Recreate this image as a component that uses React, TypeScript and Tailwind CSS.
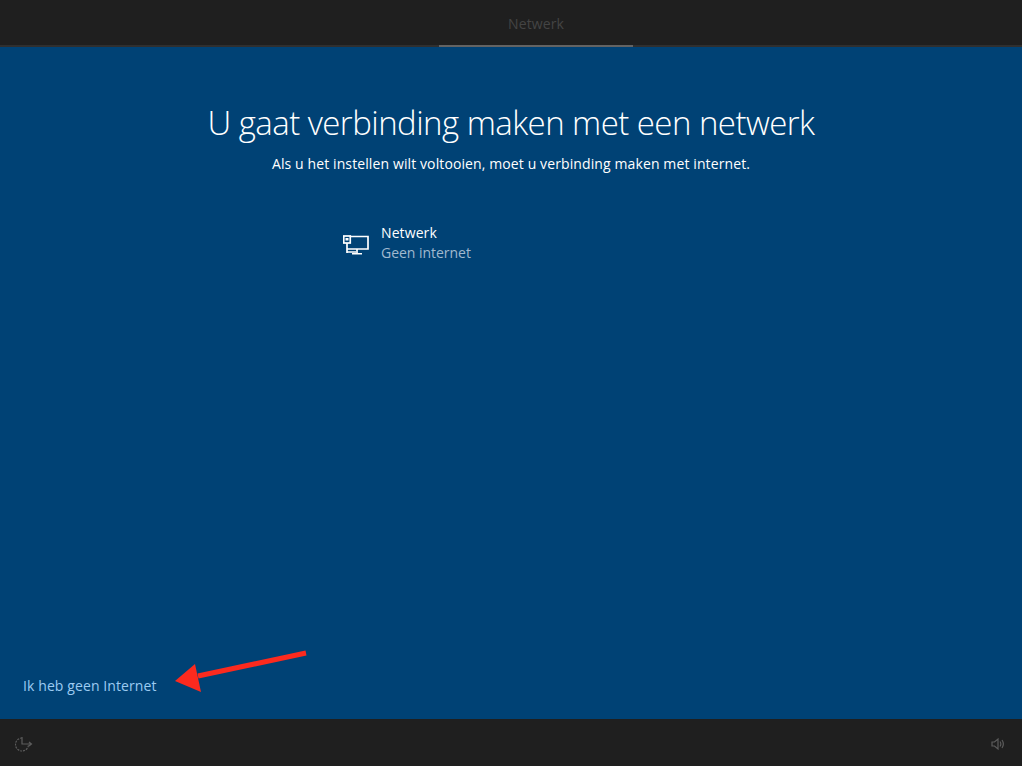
const App = () => (
  <div className="relative flex h-[766px] w-[1022px] flex-col overflow-hidden bg-[#004275] font-['Open_Sans',sans-serif] text-white">
    <div className="flex h-[47px] justify-center border-b-2 border-[#2f2f2f] bg-[#1f1f1f]">
      <div className="-mb-0.5 ml-[50px] flex h-[47px] w-[194px] justify-center border-b-2 border-[#636363] pt-[14px] text-[14px] leading-5 tracking-[0.1px] text-[#444444]">
        Netwerk
      </div>
    </div>

    <main className="flex flex-1 flex-col items-center">
      <h1 className="mt-[50px] text-[33px] leading-[52px] font-light tracking-[-0.55px]">
        U gaat verbinding maken met een netwerk
      </h1>
      <p className="mt-[5px] text-[14px] leading-5 tracking-[0.11px]">
        Als u het instellen wilt voltooien, moet u verbinding maken met internet.
      </p>

      <div className="mt-[49px] ml-[343px] flex w-[336px] items-center gap-3 self-start">
        <svg className="mt-1" width="26" height="20" viewBox="0 0 26 20" fill="none" stroke="white" strokeWidth="1.7">
          <path d="M7 1.5H25V14H4" />
          <path d="M4 8V18M4 17H13M14 14V18.5M9 18.75H19" />
          <rect x="0.75" y="1" width="6.5" height="7" fill="#004275" />
          <rect x="2.5" y="3" width="3" height="2.5" fill="white" stroke="none" />
        </svg>
        <div>
          <div className="text-[14px] leading-5 tracking-[0.1px]">Netwerk</div>
          <div className="text-[14px] leading-5 tracking-[-0.03px] text-[#a0b9cf]">Geen internet</div>
        </div>
      </div>

      <div className="mt-auto mb-[23px] self-start pl-[23px] text-[14px] leading-5 tracking-[0.1px] text-[#9ccbf2]">
        Ik heb geen Internet
      </div>
    </main>

    <footer className="flex h-[47px] items-center justify-between bg-[#1f1f1f] pt-[2px] pr-[17px] pl-[15px]">
      <svg width="18" height="16" viewBox="0 0 18 16" fill="none" stroke="#5c5c5c" strokeWidth="1.2">
        <path d="M7 2A6.5 6.5 0 1 0 13.5 8.5" strokeDasharray="2 1" />
        <path d="M7 1V8H16M14 6L16.5 8L14 10" />
      </svg>
      <svg width="14" height="14" viewBox="0 0 14 14" fill="none" stroke="#5c5c5c" strokeWidth="1.2">
        <path d="M1 5H3.5L7 2V12L3.5 9H1Z" />
        <path d="M9 4.5C10 6 10 8 9 9.5M11 3C12.7 5.5 12.7 8.5 11 11" />
      </svg>
    </footer>

    <svg className="absolute top-[645px] left-[170px]" width="140" height="50" viewBox="0 0 140 50">
      <path d="M136 8L28 31" stroke="#fc2a1e" strokeWidth="5" />
      <path d="M5 36L25 19L31 47Z" fill="#fc2a1e" />
    </svg>
  </div>
);

export default App;
